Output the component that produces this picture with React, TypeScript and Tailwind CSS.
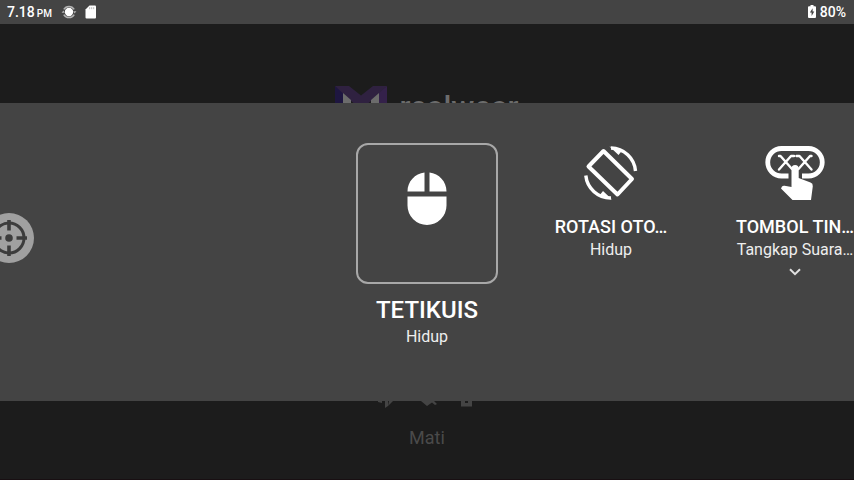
import React from "react";

function StatusBar() {
  return (
    <header className="flex h-6 shrink-0 items-center justify-between bg-[#444444] pr-2 pl-[7px] text-sm font-medium text-white">
      <div className="flex items-center">
        <time className="flex items-baseline gap-[2px] pt-px leading-6">
          7.18<span className="text-[10px]">PM</span>
        </time>
        <svg viewBox="0 0 16 16" className="ml-[9px] size-4" aria-hidden="true">
          <circle cx="8" cy="8" r="4.2" fill="#fff" />
          <path
            d="M2.8 5.4A6 6 0 0 1 13.2 5.4M13.2 10.6A6 6 0 0 1 2.8 10.6"
            fill="none"
            stroke="#b4b4b4"
            strokeWidth="1.5"
          />
          <path d="M.6 8.800 2.400 6.400 3.800 8.800zM12.200 7.200h3.200L13.600 9.600z" fill="#b4b4b4" />
        </svg>
        <svg viewBox="0 0 12 14" className="ml-2 h-[14px] w-3" aria-hidden="true">
          <path d="M4.500.5H10a1 1 0 0 1 1 1v11a1 1 0 0 1-1 1H1.500a1 1 0 0 1-1-1V4.500z" fill="#fff" />
          <path d="M4.700 2.200v2M6.700 2.200v2M8.700 2.200v2" stroke="#a8a8a8" strokeWidth="0.8" />
        </svg>
      </div>
      <div className="flex items-center gap-1">
        <svg viewBox="0 0 8 13" className="mb-[2px] h-[13px] w-2" aria-hidden="true">
          <path d="M2.500 0h3v1.300H7a1 1 0 0 1 1 1V12a1 1 0 0 1-1 1H1a1 1 0 0 1-1-1V2.300a1 1 0 0 1 1-1h1.500z" fill="#fff" />
          <path d="M4.600 3.200 1.900 7.600h1.700v3.400l2.700-4.500H4.600z" fill="#444" />
        </svg>
        <span>80%</span>
      </div>
    </header>
  );
}

function MouseIcon() {
  return (
    <svg viewBox="0 0 40 54" className="h-[54px] w-10" fill="#fff" aria-hidden="true">
      <path d="M17.500.5v19H.5C.5 9.500 8 1.500 17.500.5zM22.500.5v19h17C39.500 9.500 32 1.500 22.500.5zM.5 24.500h39v9a19.500 19.500 0 0 1-39 0z" />
    </svg>
  );
}

function RotateIcon() {
  return (
    <svg viewBox="0 0 54 54" className="size-[54px]" fill="none" stroke="#fff" aria-hidden="true">
      <path d="M19.500 5 48 33 33.500 48.500 4.500 20.500z" strokeWidth="4" strokeLinejoin="round" />
      <path d="M27 2A25 25 0 0 1 51.500 25M1.800 29.500A25 25 0 0 0 27 52" strokeWidth="3.400" />
      <path d="M25.500.5 34.500 9l4-5zM28 53.500 19 45l-4 5z" fill="#fff" stroke="none" />
    </svg>
  );
}

function ActionKeyIcon() {
  return (
    <svg viewBox="0 0 60 54" className="h-[54px] w-[60px]" fill="none" stroke="#fff" aria-hidden="true">
      <path d="M23.500 30H16.500a13.750 13.750 0 0 1 0-27.500h27a13.750 13.750 0 0 1 0 27.500H37" strokeWidth="4.800" />
      <path
        d="M14 10h1.500L27 23M14 23.500 26 10h3M46.500 10H45L33.500 23M46.500 23.500 34.500 10h-3"
        strokeWidth="2.400"
        strokeLinecap="round"
        strokeLinejoin="round"
      />
      <path
        d="M26.500 22.500a3.600 3.600 0 0 1 7.200 0v9.500l11.800 4.600a3.500 3.500 0 0 1 2.300 3.600L46 54H27.500L16 42.500l1-2a3 3 0 0 1 2.600-.7l6.900 1.200z"
        fill="#fff"
        stroke="none"
      />
    </svg>
  );
}

function TargetIcon() {
  return (
    <svg viewBox="0 0 50 50" className="size-[50px]" fill="none" stroke="#3c3c3c" aria-hidden="true">
      <circle cx="25" cy="25" r="15" strokeWidth="3" />
      <path d="M25 7v10.500M25 32.500V43M7 25h10.500M32.500 25H43" strokeWidth="3.600" />
      <circle cx="25" cy="25" r="3.800" fill="#3c3c3c" stroke="none" />
    </svg>
  );
}

function Tile({ icon, title, state, more }: { icon: React.ReactNode; title: string; state: string; more?: boolean }) {
  return (
    <button type="button" className="flex w-[120px] shrink-0 flex-col items-center pt-[3px]">
      {icon}
      <span className="mt-[15px] text-lg leading-6 font-medium whitespace-nowrap text-white">{title}</span>
      <span className="text-base leading-[22px] whitespace-nowrap text-[#eeeeee]">{state}</span>
      {more && (
        <svg viewBox="0 0 12 8" className="mt-[7px] h-2 w-3" aria-hidden="true">
          <path d="M1 1.200 6 6.200l5-5" fill="none" stroke="#e0e0e0" strokeWidth="2" />
        </svg>
      )}
    </button>
  );
}

export default function App() {
  return (
    <div
      className="relative flex h-screen flex-col overflow-hidden bg-[#1c1c1c]"
      style={{ fontFamily: 'Roboto, "Liberation Sans", sans-serif' }}
    >
      <StatusBar />

      <div className="min-h-0 flex-1 overflow-hidden">
        <div className="flex justify-center gap-3 pt-[62px]">
          <svg viewBox="0 0 52 52" className="size-[52px] shrink-0" aria-hidden="true">
            <path d="M0 0 8 6v46H0z" fill="#1e1640" />
            <path d="M52 0 44 6v46h8z" fill="#34214a" />
            <path d="M0 0h14l12 9.500L38 0h14L26 24z" fill="#2f2140" />
            <path d="M8 7 16 14v38H8zM44 7 36 14v38h8z" fill="#6c6c6c" />
          </svg>
          <span className="pt-1 text-[31px] leading-9 font-medium text-[#6c6c6c]">realwear</span>
        </div>
      </div>

      <main className="flex h-[298px] shrink-0 bg-[#444444] pt-10">
        <div className="flex-1" />
        <button type="button" className="flex w-[142px] shrink-0 flex-col items-center">
          <span className="flex h-[141px] w-full justify-center rounded-xl border-2 border-[#a8a8a8] pt-[27px]">
            <MouseIcon />
          </span>
          <span className="mt-[11px] text-2xl leading-[30px] font-medium text-white">TETIKUIS</span>
          <span className="mt-px text-base leading-[22px] text-[#eeeeee]">Hidup</span>
        </button>
        <div className="min-w-0 flex-1 overflow-hidden">
          <div className="flex items-start gap-16 pl-[53px]">
            <Tile icon={<RotateIcon />} title="ROTASI OTO…" state="Hidup" />
            <Tile icon={<ActionKeyIcon />} title="TOMBOL TIN…" state="Tangkap Suara…" more />
          </div>
        </div>
      </main>

      <div className="min-h-0 flex-1 overflow-hidden">
        <div className="flex flex-col items-center">
          <svg viewBox="0 0 100 8" className="h-2 w-[100px]" fill="#444444" aria-hidden="true">
            <path d="M1 0h4v2L1 1zM8 0h3v5L8 7zM12 0h4l-5 5zM44 0h13l3 3-2 1-3-2.500-5 3.500zM84 0h4v2h3V0h4v5.500H84z" />
          </svg>
          <span className="mt-4 text-lg leading-[26px] text-[#4a4a4a]">Mati</span>
        </div>
      </div>
      <div className="-mt-px h-px shrink-0 bg-[#180f12]" />

      <button
        type="button"
        aria-label="Target"
        className="absolute top-[213px] -left-4 size-[50px] rounded-full bg-[#a0a0a0]"
      >
        <TargetIcon />
      </button>
    </div>
  );
}
